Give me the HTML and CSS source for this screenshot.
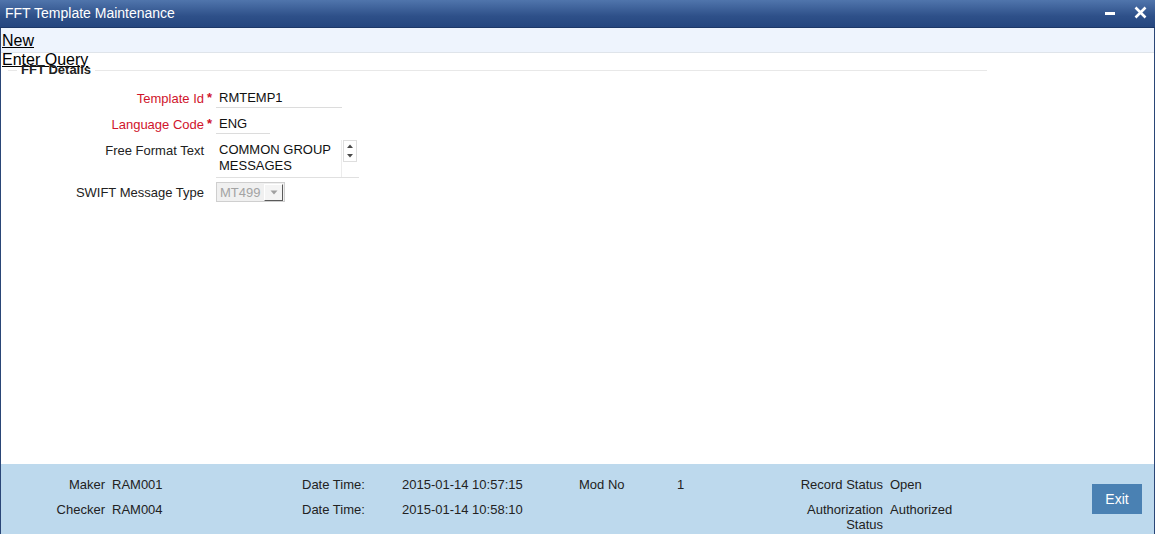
FILE: index.html
```html
<!doctype html>
<html>
<head>
<meta charset="utf-8">
<title>FFT Template Maintenance</title>
<link rel="stylesheet" href="styles.css">
</head>
<body>
<div class="window">
  <header class="titlebar">
    <span class="title">FFT Template Maintenance</span>
    <div class="win-controls">
      <svg class="win-min" width="10" height="4" viewBox="0 0 10 4"><rect x="0" y="0" width="10" height="3" fill="#fff"/></svg>
      <svg class="win-close" width="13" height="13" viewBox="0 0 13 13"><path d="M1.5 1.5 L11.5 11.5 M11.5 1.5 L1.5 11.5" stroke="#fff" stroke-width="2.6"/></svg>
    </div>
  </header>

  <nav class="toolbar">
    <a href="#">New</a>
    <a href="#">Enter Query</a>
  </nav>

  <main class="content">
    <fieldset class="section">
      <legend>FFT Details</legend>
      <div class="form-grid">
        <label class="req">Template Id</label>
        <span class="star">*</span>
        <div class="field w-long">RMTEMP1</div>

        <label class="req">Language Code</label>
        <span class="star">*</span>
        <div class="field w-short">ENG</div>

        <label class="top">Free Format Text</label>
        <span></span>
        <div class="textarea">
          <div class="ta-text">COMMON GROUP<br>MESSAGES</div>
          <div class="ta-scroll">
            <svg width="14" height="22" viewBox="0 0 14 22">
              <rect x="0.5" y="0.5" width="13" height="21" fill="#fff" stroke="#dedede"/>
              <path d="M4 8 L7 4.5 L10 8 Z" fill="#4a4a4a"/>
              <path d="M4 14 L7 17.5 L10 14 Z" fill="#4a4a4a"/>
            </svg>
          </div>
        </div>

        <label>SWIFT Message Type</label>
        <span></span>
        <div class="select">
          <span class="sel-value">MT499</span>
          <span class="sel-btn">
            <svg width="8" height="5" viewBox="0 0 8 5"><path d="M0.5 0.5 L7.5 0.5 L4 4.5 Z" fill="#a0a0a0"/></svg>
          </span>
        </div>
      </div>
    </fieldset>
  </main>

  <footer class="audit">
    <div class="audit-grid">
      <span class="a-label">Maker</span>
      <span class="a-value">RAM001</span>
      <span>Date Time:</span>
      <span>2015-01-14 10:57:15</span>
      <span>Mod No</span>
      <span>1</span>
      <span class="a-label">Record Status</span>
      <span class="a-value">Open</span>
      <button class="exit-btn">Exit</button>

      <span class="a-label">Checker</span>
      <span class="a-value">RAM004</span>
      <span>Date Time:</span>
      <span>2015-01-14 10:58:10</span>
      <span></span>
      <span></span>
      <span class="a-label">Authorization Status</span>
      <span class="a-value">Authorized</span>
    </div>
  </footer>
</div>
</body>
</html>
```

FILE: styles.css
```css
* {
  box-sizing: border-box;
}

body {
  margin: 0;
  background: #fff;
  font: 13px "Liberation Sans", Arial, sans-serif;
  color: #1e1e1e;
}

.window {
  width: 1155px;
  height: 534px;
  display: flex;
  flex-direction: column;
  border-left: 1px solid #2a4677;
  border-right: 1px solid #2a4677;
}

/* title bar */
.titlebar {
  height: 28px;
  flex: none;
  display: flex;
  align-items: center;
  justify-content: space-between;
  padding: 0 8px 2px 5px;
  margin: 0 -1px;
  background: linear-gradient(#5075ac, #2e5089 60%, #25467f);
  border-bottom: 1px solid #1d3868;
  color: #fff;
  font-size: 14px;
}

.win-controls {
  display: flex;
  align-items: center;
  gap: 19px;
}

.win-min {
  margin-top: 2px;
}

/* toolbar */
.toolbar {
  height: 25px;
  flex: none;
  padding: 3px 0 0 1px;
  background: #eef4fd;
  border-bottom: 1px solid #dfe4ea;
  font-size: 16px;
  line-height: 19px;
}

.toolbar a {
  display: block;
  width: max-content;
  color: #000;
  text-decoration: underline;
}

/* content */
.content {
  flex: 1;
}

.section {
  margin: 10px 167px 0 7px;
  padding: 0;
  border: 0;
  border-top: 1px solid #e8e8e8;
  min-width: 0;
}

.section legend {
  margin-left: 9px;
  padding: 0 4px;
  font-weight: bold;
  font-size: 13px;
  line-height: 14px;
  color: #222;
}

.form-grid {
  display: grid;
  grid-template-columns: 196px 12px auto;
  align-items: center;
  row-gap: 6px;
  padding-top: 11px;
}

.form-grid label {
  text-align: right;
  color: #222;
}

.form-grid label.req {
  color: #d0142c;
}

.form-grid label.top {
  align-self: start;
  padding-top: 3px;
}

.star {
  color: #d0142c;
  font-size: 13px;
  font-weight: bold;
  padding-left: 3px;
  padding-bottom: 2px;
}

.field {
  height: 20px;
  padding: 2px 3px 0;
  color: #111;
  border-bottom: 1px solid #dcdcdc;
}

.w-long {
  width: 126px;
}

.w-short {
  width: 54px;
}

.textarea {
  width: 143px;
  height: 38px;
  margin-bottom: -2px;
  display: flex;
  border-bottom: 1px solid #e0e0e0;
}

.ta-text {
  width: 126px;
  padding: 2px 3px 0;
  line-height: 16px;
  color: #111;
  border-right: 1px solid #ececec;
}

.ta-scroll {
  padding: 0 0 0 1px;
}

.select {
  width: 69px;
  height: 20px;
  display: flex;
  align-items: center;
  justify-content: space-between;
  padding: 0 1px 0 3px;
  background: #f0f0f0;
  border: 1px solid #cfcfcf;
  color: #a3a3a3;
}

.sel-btn {
  width: 19px;
  height: 17px;
  display: flex;
  align-items: center;
  justify-content: center;
  background: #f4f4f4;
  border: 1px solid #fff;
  border-right-color: #5a5a5a;
  border-bottom-color: #5a5a5a;
}

/* audit footer */
.audit {
  height: 70px;
  flex: none;
  background: #bdd9ed;
  padding-top: 13px;
}

.audit-grid {
  display: grid;
  grid-template-columns: 104px 197px 100px 177px 98px 120px 86px 209px 50px;
  row-gap: 10px;
  line-height: 15px;
  align-items: start;
  color: #222;
}

.a-label {
  text-align: right;
}

.a-value {
  padding-left: 7px;
}

.exit-btn {
  grid-column: 9;
  grid-row: 1 / span 2;
  align-self: start;
  margin-top: 7px;
  width: 50px;
  height: 30px;
  padding: 0;
  border: 0;
  background: #4a81b3;
  color: #fff;
  font: 14px "Liberation Sans", Arial, sans-serif;
  cursor: pointer;
}
```
